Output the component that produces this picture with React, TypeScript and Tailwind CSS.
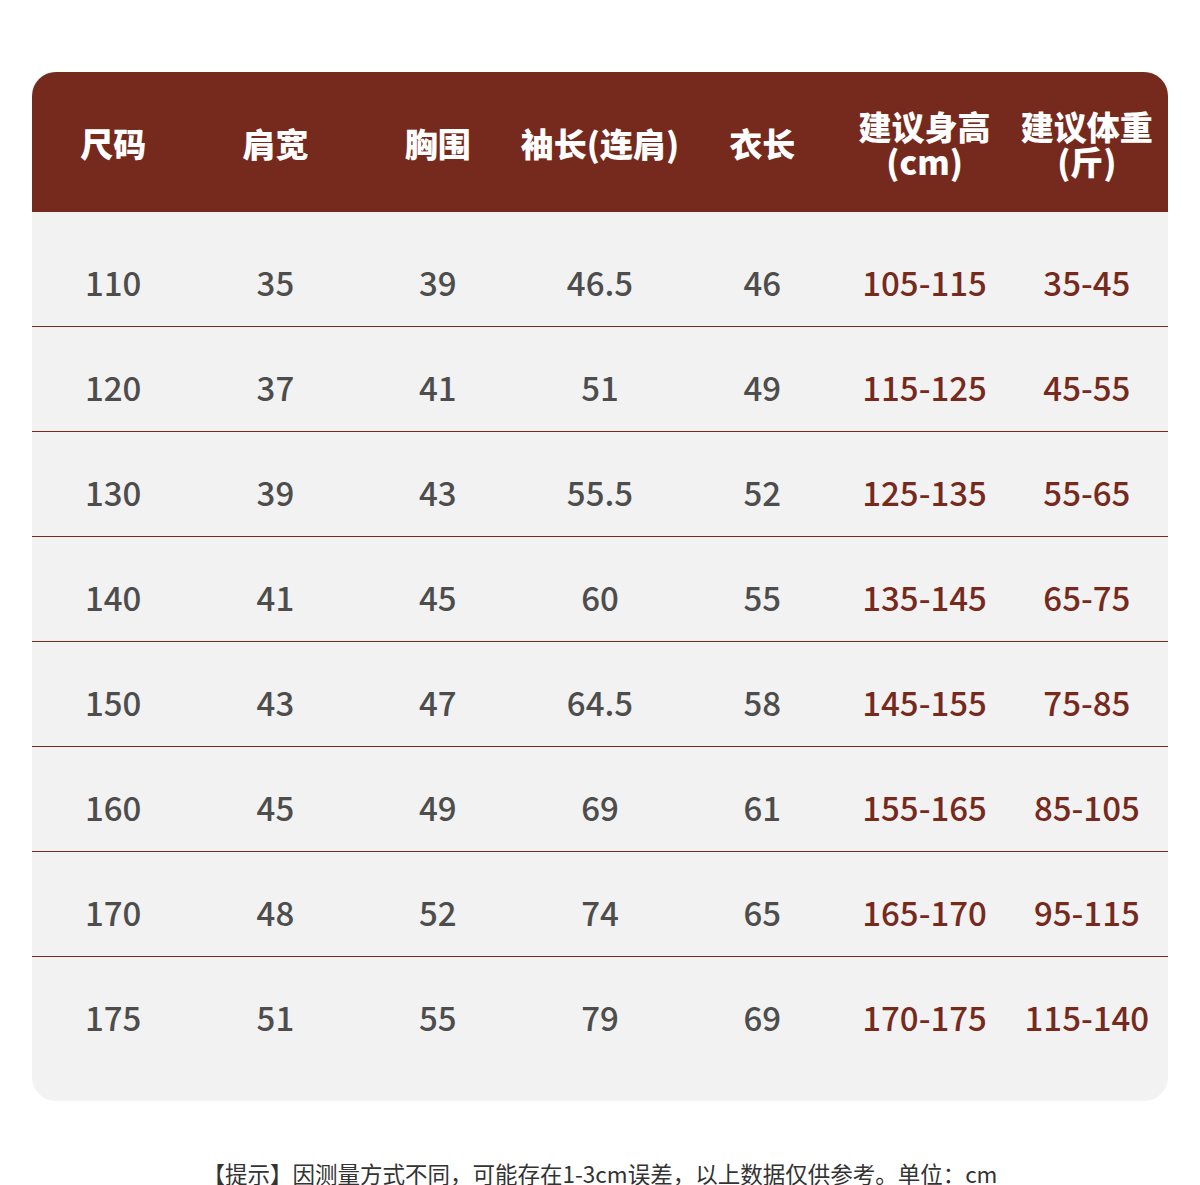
const headers: string[][] = [
  ["尺码"],
  ["肩宽"],
  ["胸围"],
  ["袖长(连肩)"],
  ["衣长"],
  ["建议身高", "(cm)"],
  ["建议体重", "(斤)"],
];

const rows: string[][] = [
  ["110", "35", "39", "46.5", "46", "105-115", "35-45"],
  ["120", "37", "41", "51", "49", "115-125", "45-55"],
  ["130", "39", "43", "55.5", "52", "125-135", "55-65"],
  ["140", "41", "45", "60", "55", "135-145", "65-75"],
  ["150", "43", "47", "64.5", "58", "145-155", "75-85"],
  ["160", "45", "49", "69", "61", "155-165", "85-105"],
  ["170", "48", "52", "74", "65", "165-170", "95-115"],
  ["175", "51", "55", "79", "69", "170-175", "115-140"],
];

const font = { fontFamily: '"Noto Sans CJK SC", "Noto Sans", sans-serif' };

export default function App() {
  return (
    <div className="w-[1200px] h-[1185px] bg-white px-[32px] pt-[72px]" style={font}>
      <div className="rounded-[24px] overflow-hidden bg-[#f2f2f2]">
        {/* header */}
        <div className="grid grid-cols-7 h-[140px] bg-[#762a1d] text-white font-black text-[33px] leading-[35px]">
          {headers.map((h, i) => (
            <div key={i} className="flex flex-col items-center justify-center pt-[3px]">
              {h.map((line) => (
                <span key={line} className="whitespace-nowrap">
                  {line}
                </span>
              ))}
            </div>
          ))}
        </div>

        {/* body */}
        <div className="pt-[10px] pb-[39px]">
          {rows.map((r, ri) => (
            <div
              key={ri}
              className={`grid grid-cols-7 h-[105px] pt-[17px] text-[33px] font-medium ${
                ri < rows.length - 1 ? "border-b border-[#7a2a1c]" : ""
              }`}
            >
              {r.map((cell, ci) => (
                <div
                  key={ci}
                  className={`flex items-center justify-center ${
                    ci >= 5 ? "text-[#762a1d]" : "text-[#4d4d4d]"
                  }`}
                >
                  {cell}
                </div>
              ))}
            </div>
          ))}
        </div>
      </div>

      <p className="mt-[61px] text-center text-[22.5px] leading-[22px] text-[#333333]">
        【提示】因测量方式不同，可能存在1-3cm误差，以上数据仅供参考。单位：cm
      </p>
    </div>
  );
}
